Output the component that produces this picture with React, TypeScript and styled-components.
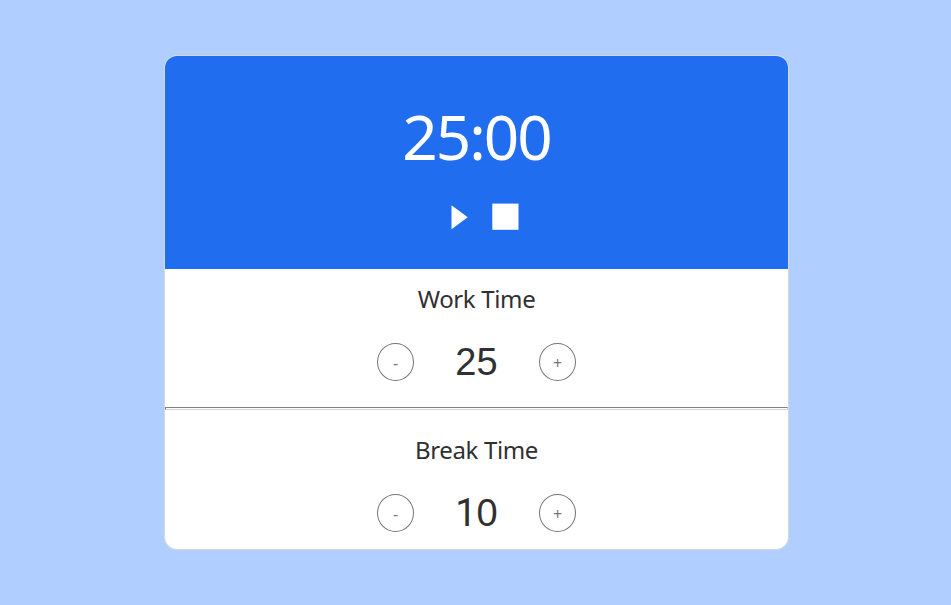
import React from "react";
import styled, { createGlobalStyle } from "styled-components";

const GlobalStyle = createGlobalStyle`
  * { box-sizing: border-box; }
  body { margin: 0; background: #b0ceff; font-family: "Noto Sans", sans-serif; color: #303030; }
`;

const Page = styled.main`
  min-height: 605px;
  padding-top: 55px;
  display: flex;
  justify-content: center;
  align-items: flex-start;
  padding-left: 2px;
`;

const Card = styled.section`
  width: 625px;
  height: 495px;
  border: 1px solid #d8d8d8;
  border-radius: 13px;
  overflow: hidden;
  background: #fff;
`;

const Header = styled.header`
  height: 213px;
  background: #216df0;
  color: #fff;
  display: flex;
  flex-direction: column;
  align-items: center;
`;

const Clock = styled.div`
  margin-top: 32px;
  height: 96px;
  line-height: 96px;
  font-weight: 400;
  font-size: 62px;
  letter-spacing: -2px;
`;

const Controls = styled.div`
  display: flex;
  margin-top: 19px;
  margin-left: 16px;
  gap: 24px;
  align-items: center;
`;

const IconButton = styled.button`
  border: 0;
  padding: 0;
  background: none;
  color: inherit;
  display: flex;
`;

const Setting = styled.div<{ $top: number }>`
  padding-top: ${(p) => p.$top}px;
  display: flex;
  flex-direction: column;
  align-items: center;
`;

const Label = styled.div`
  height: 32px;
  line-height: 32px;
  font-size: 24px;
  font-weight: 400;
  letter-spacing: -0.35px;
`;

const Stepper = styled.div`
  display: flex;
  align-items: center;
  margin-top: 28px;
  height: 38px;
`;

const RoundButton = styled.button`
  width: 37px;
  height: 38px;
  border: 1px solid #767676;
  border-radius: 50%;
  background: #fff;
  color: #777;
  font: 400 16px "Noto Sans", sans-serif;
  padding: 1px 0 0;
`;

const Value = styled.span`
  width: 125px;
  text-align: center;
  font: 38px/38px "Liberation Sans", sans-serif;
`;

const Digit = styled.span<{ $plain: boolean }>`
  font-family: ${(p) => (p.$plain ? "Roboto" : '"Liberation Sans"')}, sans-serif;
`;

const Divider = styled.hr`
  height: 3px;
  margin: 26px 0 0;
  border: 1px solid;
  border-color: #808080 #d3d3d3 #d3d3d3 #808080;
`;

function TimeSetting({ label, value, top }: { label: string; value: number; top: number }) {
  return (
    <Setting $top={top}>
      <Label>{label}</Label>
      <Stepper>
        <RoundButton>-</RoundButton>
        <Value>
          {String(value).split("").map((d, i) => (
            <Digit key={i} $plain={d === "1"}>{d}</Digit>
          ))}
        </Value>
        <RoundButton>+</RoundButton>
      </Stepper>
    </Setting>
  );
}

export default function App() {
  return (
    <Page>
      <GlobalStyle />
      <Card>
        <Header>
          <Clock>25:00</Clock>
          <Controls>
            <IconButton aria-label="Start">
              <svg width="17" height="26" viewBox="0 0 17 26"><path d="M0.5 1.3 L16.7 13.3 L0.5 25.3 Z" fill="currentColor" /></svg>
            </IconButton>
            <IconButton aria-label="Stop">
              <svg width="27" height="27" viewBox="0 0 27 27"><rect x="0.3" y="0.6" width="26.2" height="26.2" fill="currentColor" /></svg>
            </IconButton>
          </Controls>
        </Header>
        <TimeSetting label="Work Time" value={25} top={14} />
        <Divider />
        <TimeSetting label="Break Time" value={10} top={24} />
      </Card>
    </Page>
  );
}
